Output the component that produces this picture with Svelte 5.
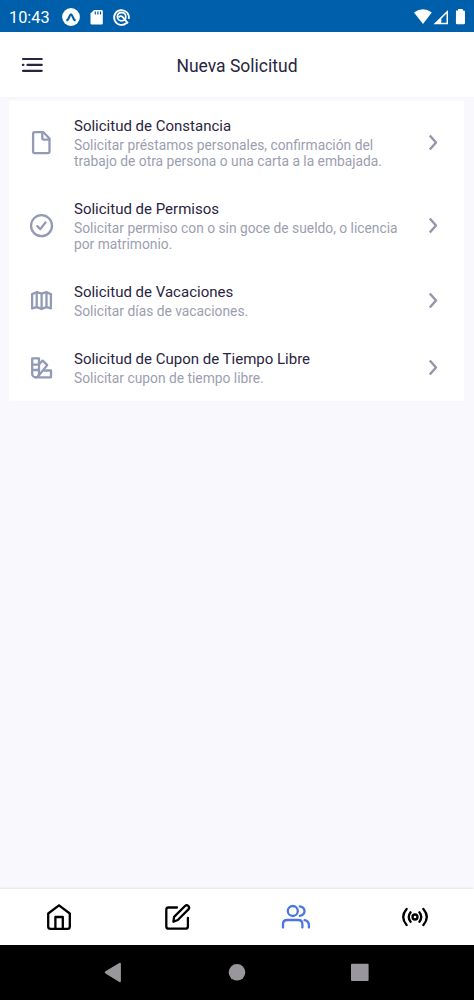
<script lang="ts">
	type IconName = 'file' | 'check' | 'map' | 'swatch';

	interface RequestType {
		icon: IconName;
		title: string;
		description: string;
	}

	const requests: RequestType[] = [
		{
			icon: 'file',
			title: 'Solicitud de Constancia',
			description: 'Solicitar préstamos personales, confirmación del trabajo de otra persona o una carta a la embajada.'
		},
		{
			icon: 'check',
			title: 'Solicitud de Permisos',
			description: 'Solicitar permiso con o sin goce de sueldo, o licencia por matrimonio.'
		},
		{ icon: 'map', title: 'Solicitud de Vacaciones', description: 'Solicitar días de vacaciones.' },
		{ icon: 'swatch', title: 'Solicitud de Cupon de Tiempo Libre', description: 'Solicitar cupon de tiempo libre.' }
	];

	const tabs = ['Inicio', 'Editar', 'Personas', 'Transmisiones'];
	let active = $state('Personas');
</script>

<div class="screen">
	<div class="status">
		<span class="clock">10:43</span>
		<svg class="notifications" width="70" height="20" viewBox="0 0 70 20">
			<circle cx="9" cy="10" r="8.9" fill="#fff" />
			<path d="M5.3 13.2C7 11.800 7.800 7.300 9 7.300s2 4.500 3.700 5.900" fill="none" stroke="#005fab" stroke-width="2.200" stroke-linecap="round" />
			<path d="M32 3h7.500q1.300 0 1.300 1.300v12q0 1.300-1.300 1.300H29.800q-1.300 0-1.300-1.300V6.500z" fill="#fff" />
			<path d="M33.300 4.500v3M35.900 4.500v3M38.500 4.500v3" stroke="#005fab" stroke-width="1.200" />
			<g fill="none" stroke="#fff" stroke-width="1.800">
				<path d="M64.500 16A7.400 7.400 0 1 1 66.800 11.800" />
				<circle cx="59.600" cy="9.700" r="4.200" />
				<path d="M56.500 10.500q2-2.500 4.300-.3l5.200 6.100" />
			</g>
		</svg>
		<svg class="signals" width="52" height="18" viewBox="0 0 52 18">
			<path d="M0 4.600Q9-2 17.800 4.600L9 16z" fill="#fff" />
			<path d="M19.500 16.200L34 2v14.200z" fill="#fff" />
			<path d="M27.300 10.700l5.200-5.100v9.200h-5.200z" fill="#005fab" />
			<path d="M42 2.600h2V1h4.700v1.600h1.100q1.200 0 1.200 1.200v11.300q0 1.200-1.200 1.200h-6.700q-1.200 0-1.200-1.200z" fill="#fff" />
		</svg>
	</div>

	<header>
		<button class="menu" aria-label="Menú">
			<svg width="22" height="16" viewBox="0 0 22 16" fill="none" stroke="#292541" stroke-width="2.200" stroke-linecap="round">
				<path d="M2 2h18.700M6.500 7.900h14.200M1.900 7.900h.5M2 13.800h18.700" />
			</svg>
		</button>
		<h1>Nueva Solicitud</h1>
	</header>

	<main>
		<div class="list">
			{#each requests as request (request.title)}
				<button class="row">
					<svg class="icon" width="24" height="24" viewBox="0 0 24 24">
						{#if request.icon === 'file'}
							<path d="M4.700 1.200h8.700l6.100 6.300v13.100q0 1.600-1.600 1.600H4.700q-1.600 0-1.600-1.600V2.800q0-1.600 1.600-1.600z" />
							<path d="M12.300 1.500v5.600q0 1.500 1.500 1.500h5.400" />
						{:else if request.icon === 'check'}
							<circle cx="11.500" cy="11.700" r="10.500" />
							<path d="M7.300 12.100l3 3 5.200-6.600" />
						{:else if request.icon === 'map'}
							<path d="M2.100 5.100l4.600-1.900 4.900 1.400 4.900-1.400 4.400 1.900v14.300l-4.400-1.300-4.900 1.700-4.900-1.700-4.600 1.300z" />
							<path d="M6.700 3.200v14.900M11.600 4.600v15.200M16.500 3.200v14.900" />
						{:else}
							<path d="M2.200 2.400H9v15.500a3.400 3.400 0 0 1-6.800 0zM2.200 8.600H9M2.200 14H9" />
							<path d="M9 8.300l3.700-3.700 4.500 4.500L8 20.500" />
							<path d="M14 14.500h7v6.800H5.600" />
						{/if}
					</svg>
					<span class="text">
						<span class="title">{request.title}</span>
						<span class="description">{request.description}</span>
					</span>
					<svg class="chevron" width="12" height="20" viewBox="0 0 12 20">
						<path d="M1.800 2.500L8 9.500l-6.200 7" />
					</svg>
				</button>
			{/each}
		</div>
	</main>

	<nav class="tabs">
		{#each tabs as tab (tab)}
			<button class:active={active === tab} aria-label={tab} onclick={() => (active = tab)}>
				<svg width="30" height="30" viewBox="0 0 30 30">
					{#if tab === 'Inicio'}
						<path d="M4.200 11.500L15 3.300l10.800 8.200v13q0 2.400-2.400 2.400H6.600q-2.400 0-2.400-2.400z" />
						<path d="M11.400 26.900V15h7.400v11.900" />
					{:else if tab === 'Editar'}
						<path d="M14 5.500H5.500Q3.300 5.500 3.300 7.700v16.700q0 2.300 2.300 2.300h17q2.300 0 2.300-2.300v-8.600" />
						<path d="M10.400 19.700l.7-4.800L22 4q1.700-1.500 3.400 0 1.500 1.700 0 3.400L14.800 18z" />
					{:else if tab === 'Personas'}
						<circle cx="11.800" cy="9" r="5" />
						<path d="M2 25.500v-3.200q0-4.300 4.300-4.300h10.800q4.300 0 4.300 4.300v3.200" />
						<path d="M18.800 4.300c6.300 1 6.300 8.500 0 9.500M23.600 18.200q4.300.9 4.300 4.900v2.400" />
					{:else}
						<circle cx="15" cy="15" r="2.500" />
						<path d="M10.600 10.300q-3.700 4.700 0 9.400M19.400 10.300q3.700 4.700 0 9.400M6.600 7q-6.800 8 0 16M23.400 7q6.800 8 0 16" />
					{/if}
				</svg>
			</button>
		{/each}
	</nav>

	<div class="system">
		<svg width="474" height="55" viewBox="0 0 474 55" fill="#99979b">
			<path d="M105.500 26.300L119.300 18q1.600-.7 1.600 1v17q0 1.700-1.600.9l-13.800-8.300q-1.700-1.200 0-2.300z" />
			<circle cx="237" cy="27.300" r="8.300" />
			<rect x="351" y="18.700" width="17.600" height="17.300" rx="1" />
		</svg>
	</div>
</div>

<style>
	:global(body) {
		margin: 0;
	}
	.screen {
		display: flex;
		flex-direction: column;
		width: 474px;
		height: 1000px;
		background: #f8f8fd;
		font-family: Roboto, sans-serif;
		color: #292541;
		overflow: hidden;
	}
	button {
		padding: 0;
		border: 0;
		background: none;
		font: inherit;
		color: inherit;
		text-align: left;
	}
	svg {
		display: block;
		flex: none;
	}
	.status {
		display: flex;
		align-items: center;
		box-sizing: border-box;
		height: 32px;
		padding: 2px 8px 0 9px;
		background: #005fab;
		color: #fff;
	}
	.clock {
		width: 53px;
		font-size: 16.300px;
	}
	.signals {
		margin-left: auto;
	}
	header {
		display: grid;
		grid-template-columns: 53px 1fr 53px;
		align-items: center;
		height: 65px;
		background: #fff;
		box-shadow: 0 1px 4px rgba(0, 0, 0, 0.02);
	}
	.menu {
		padding-left: 21px;
	}
	h1 {
		margin: 2px 0 0;
		font-size: 17.500px;
		font-weight: 400;
		text-align: center;
	}
	main {
		flex: 1;
		padding: 4px 10px 0 9px;
	}
	.list {
		background: #fff;
	}
	.row {
		display: flex;
		align-items: center;
		box-sizing: border-box;
		width: 100%;
		padding: 16px 24px 16px 21px;
	}
	.icon,
	.chevron {
		fill: none;
		stroke: #939ab5;
		stroke-width: 2.300;
		stroke-linejoin: round;
		stroke-linecap: round;
	}
	.chevron {
		stroke: #9496ac;
		stroke-width: 2.500;
		stroke-linecap: butt;
	}
	.text {
		flex: 1;
		margin: 0 20px;
	}
	.title,
	.description {
		display: block;
	}
	.title {
		padding-bottom: 1px;
		font-size: 15px;
		line-height: 19px;
	}
	.description {
		margin-bottom: -1px;
		font-size: 13.800px;
		line-height: 16px;
		color: #9c9eb0;
	}
	.tabs {
		display: grid;
		grid-template-columns: repeat(4, 1fr);
		height: 56px;
		background: #fff;
		box-shadow: 0 -1px 2px rgba(0, 0, 0, 0.08);
	}
	.tabs button {
		display: flex;
		align-items: center;
		justify-content: center;
		color: #000;
	}
	.tabs svg {
		fill: none;
		stroke: currentColor;
		stroke-width: 2.300;
		stroke-linecap: round;
		stroke-linejoin: round;
	}
	.tabs .active {
		color: #4b75e0;
	}
	.system {
		height: 55px;
		background: #000;
	}
</style>
